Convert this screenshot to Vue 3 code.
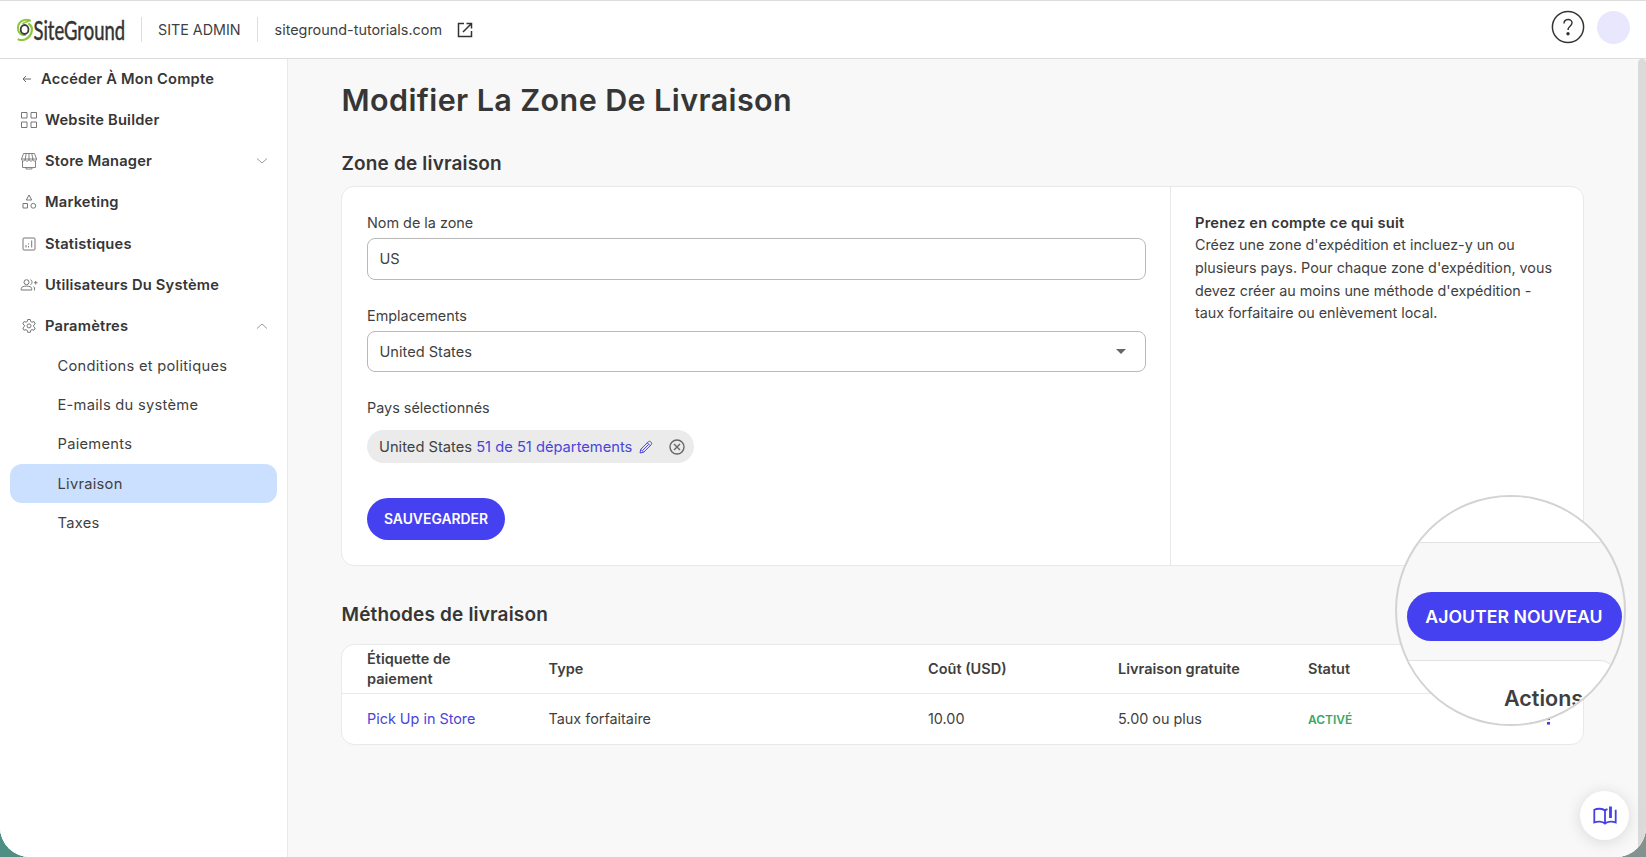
<script setup>
const navTop = [
  { icon: 'grid', label: 'Website Builder' },
  { icon: 'store', label: 'Store Manager', chevron: 'down' },
  { icon: 'shapes', label: 'Marketing' },
  { icon: 'stats', label: 'Statistiques' },
  { icon: 'users', label: 'Utilisateurs Du Système' },
  { icon: 'gear', label: 'Paramètres', chevron: 'up' },
]
const subItems = ['Conditions et politiques', 'E-mails du système', 'Paiements', 'Livraison', 'Taxes']
</script>

<template>
  <div class="window">
    <header class="topbar">
      <svg class="logo" width="111" height="34" viewBox="0 -3 111 34">
        <g fill="none" stroke-linecap="round">
          <path d="M15 4.500C9 2 2.500 6 3 13c.2 4 3.500 6.500 7 6" stroke="#8dc63f" stroke-width="2" />
          <path d="M14 8c4 2.500 3.500 8 1 11.500C12.500 23 8 25 3.500 23.500" stroke="#8dc63f" stroke-width="2.200" />
          <path d="M14.500 4.500C12 6 10 6 8 7.500" stroke="#8dc63f" stroke-width="1.600" />
          <ellipse cx="9.600" cy="13.500" rx="3.900" ry="4.500" stroke="#3b3b3b" stroke-width="1.800" />
        </g>
        <text x="18.500" y="24" textLength="91.500" lengthAdjust="spacingAndGlyphs">SiteGround</text>
      </svg>
      <span class="vline first"></span>
      <span class="admin">SITE ADMIN</span>
      <span class="vline second"></span>
      <span class="domain">siteground-tutorials.com</span>
      <svg class="ext" width="16" height="16" viewBox="0 0 16 16" fill="none" stroke="#333" stroke-width="1.500">
        <path d="M7 1.500H1.500v13h13V9M9.500 1.500h5v5M14.500 1.500 6 10" />
      </svg>
      <span class="spacer"></span>
      <svg class="help" width="34" height="34" viewBox="0 0 34 34" fill="none" stroke="#333">
        <circle cx="17" cy="17" r="15.600" stroke-width="1.500" />
        <path d="M13 13.500c0-5 8-5.300 8-.8 0 3.600-4 3.600-4 7.300" stroke-width="1.400" />
        <circle cx="17" cy="23.700" r="1.700" fill="#333" stroke="none" />
      </svg>
      <span class="avatar"></span>
    </header>

    <div class="body">
      <nav class="sidebar">
        <a class="row back">
          <svg width="10" height="8" viewBox="0 0 10 8" fill="none" stroke="#666" stroke-width="1"><path d="M9 4H1.200M4 1 1 4l3 3" /></svg>
          <span>Accéder À Mon Compte</span>
        </a>
        <a v-for="n in navTop" :key="n.label" class="row">
          <svg class="ico" width="18" height="18" viewBox="0 0 18 18" fill="none" stroke="#777" stroke-width="1">
            <path v-if="n.icon === 'grid'" d="M1.500 1.500h5.500v5.500H1.500zM11 1.500h5.500v5.500H11zM1.500 11h5.500v5.500H1.500zM11 11h5.500v5.500H11z" />
            <path v-else-if="n.icon === 'store'" stroke-width=".9" d="M3.500 1.500h11l2 5.500h-15zM1.500 7c0 2.800 3.700 2.800 3.700 0 0 2.800 3.800 2.800 3.800 0 0 2.800 3.800 2.800 3.800 0 0 2.800 3.700 2.800 3.700 0M5.200 7l1-5.500M9 7V1.500M12.800 7l-1-5.500M2.500 9v6.500h13V9M6 15.500v1.500h6v-1.500" />
            <path v-else-if="n.icon === 'shapes'" d="M9 2 6.300 7h5.400zM3 10.500h4.500V15H3zM15.700 12.800a2.400 2.400 0 1 1-4.800 0 2.400 2.400 0 0 1 4.800 0z" />
            <template v-else-if="n.icon === 'stats'">
              <rect x="3" y="3" width="12" height="12" rx="1" />
              <path d="M6 10v2.500M8.500 11v1.500M8.500 8.500v1M11.700 5.500v7" />
            </template>
            <path v-else-if="n.icon === 'users'" d="M9 6.200a2.500 2.500 0 1 1-5 0 2.500 2.500 0 0 1 5 0zM1.200 14v-1.500c0-3.200 10.500-3.200 10.500 0V14zM10.500 3.700c2 .6 2 4.400 0 5M14 6.700h3.500M15.700 5v3.500M13.500 10.500c1.300.7 1 2 1 4" />
            <template v-else>
              <path d="M7.700 2.500h2.600l.4 1.900 1.300.8 1.900-.7 1.300 2.300-1.500 1.300v1.600l1.500 1.300-1.300 2.300-1.900-.7-1.300.8-.4 1.900H7.700l-.4-1.900-1.300-.8-1.900.7L2.800 11l1.500-1.300V8.100L2.800 6.800l1.300-2.300 1.900.7 1.300-.8z" />
              <circle cx="9" cy="8.900" r="2" />
            </template>
          </svg>
          <span>{{ n.label }}</span>
          <svg v-if="n.chevron" class="chev" :class="n.chevron" width="12" height="8" viewBox="0 0 12 8" fill="none" stroke="#999"><path d="M1 1.500l5 4.500 5-4.500" /></svg>
        </a>
        <div class="subs">
          <a v-for="s in subItems" :key="s" class="sub" :class="{ active: s === 'Livraison' }">{{ s }}</a>
        </div>
      </nav>

      <main class="main">
        <h1>Modifier La Zone De Livraison</h1>
        <h2 class="t1">Zone de livraison</h2>
        <section class="card zone">
          <div class="form">
            <label>Nom de la zone</label>
            <div class="field"><span>US</span></div>
            <label>Emplacements</label>
            <div class="field"><span>United States</span><i class="caret"></i></div>
            <label>Pays sélectionnés</label>
            <div class="chip">
              <span>United States <b>51 de 51 départements</b></span>
              <svg class="pencil" width="14" height="14" viewBox="0 0 14 14" fill="none" stroke="#4a45e0" stroke-width="1"><path d="M1 13l.8-3.700L9.500 1.600c1.300-1.300 4.200 1.500 2.900 2.900L4.700 12.200zM8.300 2.800l2.900 2.900M1.800 9.300l2.900 2.900M3.500 10.500l6-6" /></svg>
              <svg class="close" width="16" height="16" viewBox="0 0 16 16" fill="none" stroke="#666" stroke-width="1.400"><circle cx="8" cy="8" r="7" /><path d="M5 5l6 6M11 5l-6 6" /></svg>
            </div>
            <button class="save">SAUVEGARDER</button>
          </div>
          <aside class="note">
            <strong>Prenez en compte ce qui suit</strong>
            <p>Créez une zone d'expédition et incluez-y un ou<br>plusieurs pays. Pour chaque zone d'expédition, vous<br>devez créer au moins une méthode d'expédition -<br>taux forfaitaire ou enlèvement local.</p>
          </aside>
        </section>

        <h2 class="t2">Méthodes de livraison</h2>
        <section class="card table">
          <div class="tr th"><span>Étiquette de<br>paiement</span><span>Type</span><span>Coût (USD)</span><span>Livraison gratuite</span><span>Statut</span><span></span></div>
          <div class="tr td"><a>Pick Up in Store</a><span>Taux forfaitaire</span><span>10.00</span><span>5.00 ou plus</span><em>ACTIVÉ</em><i class="dots"></i></div>
        </section>
      </main>
      <div class="scroll"></div>
    </div>

    <div class="lens">
      <div class="lens-top"></div>
      <div class="lens-mid"><span class="add">AJOUTER NOUVEAU</span></div>
      <div class="lens-bot">Actions</div>
    </div>
    <div class="fab">
      <svg width="24" height="20" viewBox="0 0 24 20" fill="none" stroke="#4540e8" stroke-width="1.800"><path d="M12 17.500V4.500C9.500 2.300 4.500 2.300 1.300 3.700V16.500c3-1.300 8.200-1.300 10.700 1 2.500-2.300 7.700-2.300 10.700-1V3.700M12 4.500c.8-.6 1.600-1 2.500-1.300" /><path d="M17.500 .5v11.500" stroke-width="2.800" /></svg>
    </div>
  </div>
</template>

<style>
html, body { margin: 0; background: linear-gradient(90deg, #4f8f83 0 50%, #84928f 50%); }
</style>
<style scoped>
* { box-sizing: border-box; }
.window { position: relative; width: 1646px; height: 857px; overflow: hidden; border-radius: 0 0 30px 30px; background: #fff; color: #3f3f3f; font: 14.4px/20px Inter, "Noto Sans", sans-serif; display: flex; flex-direction: column; }
.topbar { position: relative; z-index: 1; height: 59px; flex: none; display: flex; align-items: center; border-top: 1px solid #dcdcdc; border-bottom: 1px solid #dcdcdc; padding: 0 16px 0 15px; }
.logo { flex: none; }
.logo text { font: 26.500px/1 Lato, sans-serif; fill: #333; stroke: #333; stroke-width: .5; }
.vline { width: 1px; height: 25px; background: #dedede; }
.vline.first { margin: 0 16px 0 15px; }
.vline.second { margin: 0 17px 0 16px; }
.admin { font-size: 14.300px; }
.ext { margin-left: 15px; }
.spacer { flex: 1; }
.help { margin-top: -5px; margin-right: 12px; }
.avatar { width: 33px; height: 33px; border-radius: 50%; background: #e9e7fd; margin-top: -5px; }
.body { flex: 1; display: flex; min-height: 0; background: #f8f8f8; }
.sidebar { width: 288px; flex: none; border-right: 1px solid #e9e9e9; background: #fff; overflow: hidden; margin-top: -1px; }
.row { height: 41.250px; display: flex; align-items: center; padding: 0 19px 0 20px; font-weight: 600; font-size: 14.700px; letter-spacing: .2px; color: #363636; gap: 7px; }
.row.back { padding-left: 22px; gap: 9px; }
.ico { flex: none; }
.chev { margin-left: auto; }
.chev.up { transform: rotate(180deg); }
.subs { padding: 0 10px; }
.sub { height: 39.100px; display: flex; align-items: center; padding-left: 47.500px; border-radius: 12px; font-size: 14.700px; letter-spacing: .27px; }
.sub.active { background: #cbdffe; }
.main { flex: 1; background: #f8f8f8; padding: 0 53px; }
h1 { margin: 21px 0 0 .5px; font-size: 30.500px; line-height: 40px; font-weight: 600; letter-spacing: .4px; color: #363636; }
h2 { margin: 0 0 0 .5px; font-size: 19px; line-height: 26px; font-weight: 600; letter-spacing: .17px; color: #363636; }
.t1 { margin-top: 31px; }
.card { width: 1243px; background: #fff; border: 1px solid #e9e9e9; border-radius: 13px; }
.zone { margin-top: 9px; height: 380px; display: flex; }
.form { width: 828px; flex: none; padding: 26px 24px 0 25px; display: flex; flex-direction: column; align-items: flex-start; }
.form label { height: 20px; margin-bottom: 5px; }
.field { width: 779px; height: 42px; border: 1px solid #b9b9b9; border-radius: 8px; padding: 0 19px 0 11.500px; display: flex; align-items: center; justify-content: space-between; margin-bottom: 26px; font-size: 14.600px; }
.field + label + .field { height: 41px; }
.caret { border: 5px solid transparent; border-top-color: #666; border-bottom: 0; }
.chip { margin-top: 7px; height: 33px; width: 327px; border-radius: 17px; background: #ebebeb; display: flex; align-items: center; padding-left: 12px; font-size: 14.700px; }
.chip b, .td a { font-weight: 400; color: #4a45d8; }
.pencil { margin-left: 7px; }
.close { margin-left: 16px; }
.save { margin-top: 35px; width: 138px; height: 42px; border: 0; border-radius: 21px; background: #4540f0; color: #fff; font: 600 13.900px Inter, sans-serif; }
.note { flex: 1; border-left: 1px solid #e9e9e9; padding: 24.500px 24px 0; font-size: 14.330px; line-height: 22.700px; white-space: nowrap; }
.note strong { font-weight: 600; font-size: 14.700px; letter-spacing: .17px; color: #363636; }
.note p { margin: 0; }
.t2 { margin-top: 36px; }
.table { margin-top: 16px; height: 101px; }
.tr { display: grid; grid-template-columns: 181.500px 379.500px 190px 190px 204px 72px; align-items: center; height: 50px; padding-left: 25px; }
.th { height: 49px; font-weight: 600; font-size: 14.500px; line-height: 20.500px; border-bottom: 1px solid #e9e9e9; }
.td em { font: 600 12px Inter, sans-serif; color: #3aa765; padding-top: 1px; }
.dots { width: 3px; height: 13.500px; justify-self: center; background: radial-gradient(circle, #4540e0 1.500px, transparent 1.700px) 0 0 / 3px 4.500px; }
.scroll { width: 8px; background: #dadada; border-radius: 4px 4px 0 0; }
.lens { position: absolute; left: 1395px; top: 495px; width: 231px; height: 231px; border-radius: 50%; border: 2px solid #d3d3d5; overflow: hidden; background: #f8f8f8; }
.lens-top { height: 46px; background: #fff; border-bottom: 1px solid #e2e2e2; }
.lens-mid { height: 117px; padding: 49px 0 0 9.500px; }
.add { width: 215px; height: 49px; border-radius: 25px; background: #4540f0; color: #fff; font-weight: 600; font-size: 17.700px; display: flex; align-items: center; justify-content: center; }
.lens-bot { width: 217px; height: 80px; background: #fff; border: 1px solid #e2e2e2; border-radius: 0 13px 0 0; padding: 27px 0 0 106px; font-size: 21.500px; font-weight: 600; }
.fab { position: absolute; left: 1580px; top: 791px; width: 49px; height: 49px; border-radius: 50%; background: #fff; box-shadow: 0 2px 16px rgba(0,0,0,.13); display: flex; align-items: center; justify-content: center; }
</style>
